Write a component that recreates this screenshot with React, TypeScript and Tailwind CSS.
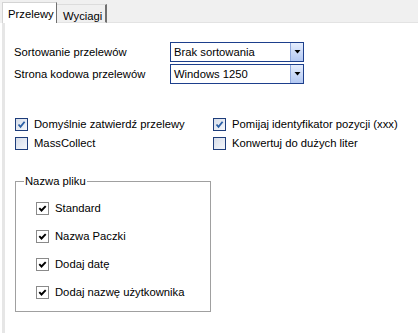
import React from 'react';

function AeroCheck({ checked }: { checked: boolean }) {
    return (
        <span className="flex items-center justify-center w-[13px] h-[13px] border border-[#1e3d7b] bg-gradient-to-br from-[#d6dde9] to-[#f5f7fb] shrink-0">
            {checked && (
                <svg width="9" height="9" viewBox="0 0 9 9">
                    <path d="M1.5 4.5 L3.5 6.8 L7.6 1.8" fill="none" stroke="#2a5fa6" strokeWidth="1.8" />
                </svg>
            )}
        </span>
    );
}

function FlatCheck() {
    return (
        <span className="flex items-center justify-center w-[13px] h-[13px] border border-[#8a8a8a] bg-white shrink-0">
            <svg width="9" height="9" viewBox="0 0 9 9">
                <path d="M1.3 4.2 L3.5 6.5 L7.7 2.1" fill="none" stroke="#000" strokeWidth="1.9" />
            </svg>
        </span>
    );
}

function Combo({ value }: { value: string }) {
    return (
        <div className="flex w-[134px] h-[20px] border border-[#1d3f8c] bg-white">
            <span className="flex-1 flex items-center pl-[3px] text-black">{value}</span>
            <span className="w-[13px] flex items-center justify-center border-l border-[#8fa8dc] bg-gradient-to-b from-[#e6eefd] to-[#b3c8f2]">
                <svg width="7" height="4" viewBox="0 0 7 4">
                    <path d="M0.5 0 L6.5 0 L3.5 3.5 Z" fill="#000" />
                </svg>
            </span>
        </div>
    );
}

export default function App() {
    const fileOptions = ['Standard', 'Nazwa Paczki', 'Dodaj datę', 'Dodaj nazwę użytkownika'];

    return (
        <div className="w-[418px] h-[333px] bg-white overflow-hidden text-[11.25px] text-black" style={{ fontFamily: '"Liberation Sans", Arial, sans-serif' }}>
            {/* tab strip */}
            <div className="flex items-end h-[23px] bg-[#f0f0f0] pl-[2px]">
                <div className="w-[55px] h-[21px] bg-white border-l border-t border-[#d4d4d4] border-r border-r-[#6f6f6f] flex items-start pt-[3px] pl-[5px]">
                    Przelewy
                </div>
                <div className="w-[50px] h-[19px] flex items-start pt-[3px] pl-[6px] border-t border-[#dcdcdc] border-r-2 border-r-[#707070] border-b border-b-[#e3e3e3]">
                    Wyciagi
                </div>
                <div className="flex-1 h-[1px] border-b border-[#e3e3e3]"></div>
            </div>

            <div className="flex h-[310px]">
                <div className="w-[3px] ml-[2px] bg-[#e6e6e6]"></div>
                <div className="flex-1 flex flex-col pl-[9px]">
                    <div className="flex flex-col gap-[2px] mt-[19px]">
                        <div className="flex items-center">
                            <span className="w-[156px]">Sortowanie przelewów</span>
                            <Combo value="Brak sortowania" />
                        </div>
                        <div className="flex items-center">
                            <span className="w-[156px]">Strona kodowa przelewów</span>
                            <Combo value="Windows 1250" />
                        </div>
                    </div>

                    <div className="grid grid-cols-[198px_1fr] gap-y-[1px] mt-[31px] pl-[1px]">
                        <div className="flex items-center gap-[6px] h-[18px]"><AeroCheck checked={true} />Domyślnie zatwierdź przelewy</div>
                        <div className="flex items-center gap-[6px] h-[18px]"><AeroCheck checked={true} />Pomijaj identyfikator pozycji (xxx)</div>
                        <div className="flex items-center gap-[6px] h-[18px]"><AeroCheck checked={false} />MassCollect</div>
                        <div className="flex items-center gap-[6px] h-[18px]"><AeroCheck checked={false} />Konwertuj do dużych liter</div>
                    </div>

                    <fieldset className="w-[196px] h-[138px] mt-[22px] ml-[1px] border border-[#a0a0a0]">
                        <legend className="ml-[8px] px-[1px] leading-[14px]">Nazwa pliku</legend>
                        <div className="flex flex-col gap-[15px] mt-[14px] pl-[20px]">
                            {fileOptions.map(opt => (
                                <div key={opt} className="flex items-center gap-[6px] h-[13px]">
                                    <FlatCheck />
                                    {opt}
                                </div>
                            ))}
                        </div>
                    </fieldset>
                </div>
            </div>
        </div>
    );
}
